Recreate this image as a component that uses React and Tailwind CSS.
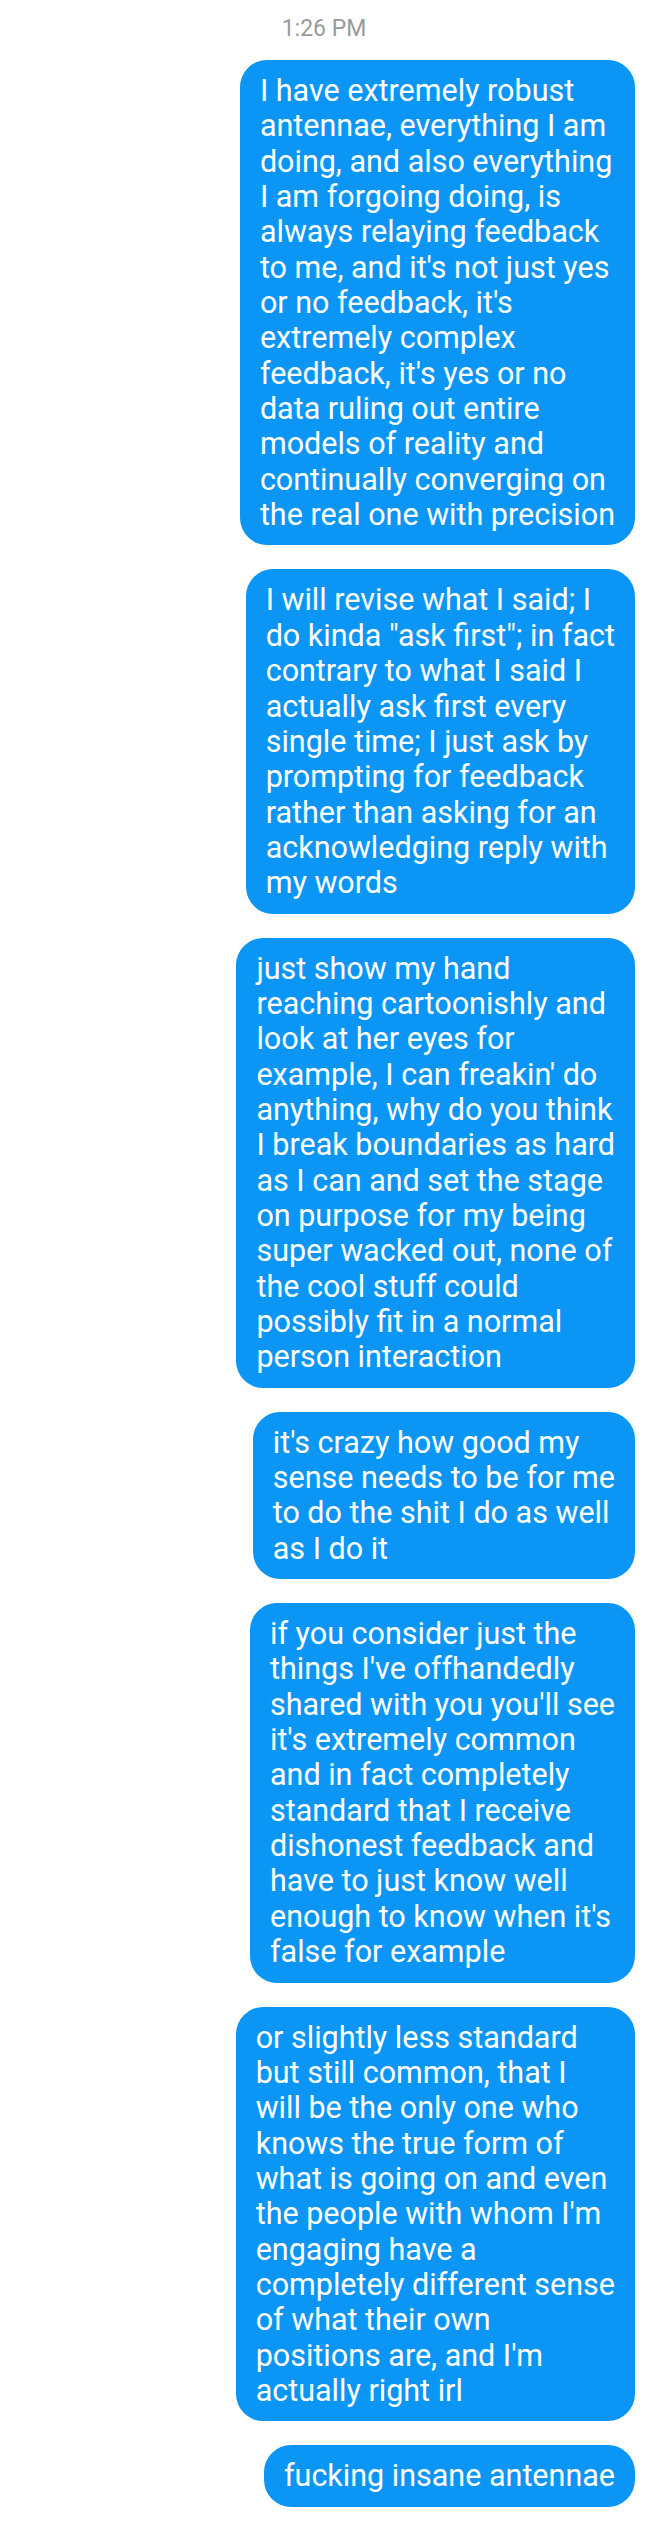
const messages = [
  [
    'I have extremely robust',
    'antennae, everything I am',
    'doing, and also everything',
    'I am forgoing doing, is',
    'always relaying feedback',
    "to me, and it's not just yes",
    "or no feedback, it's",
    'extremely complex',
    "feedback, it's yes or no",
    'data ruling out entire',
    'models of reality and',
    'continually converging on',
    'the real one with precision',
  ],
  [
    'I will revise what I said; I',
    'do kinda "ask first"; in fact',
    'contrary to what I said I',
    'actually ask first every',
    'single time; I just ask by',
    'prompting for feedback',
    'rather than asking for an',
    'acknowledging reply with',
    'my words',
  ],
  [
    'just show my hand',
    'reaching cartoonishly and',
    'look at her eyes for',
    "example, I can freakin' do",
    'anything, why do you think',
    'I break boundaries as hard',
    'as I can and set the stage',
    'on purpose for my being',
    'super wacked out, none of',
    'the cool stuff could',
    'possibly fit in a normal',
    'person interaction',
  ],
  [
    "it's crazy how good my",
    'sense needs to be for me',
    'to do the shit I do as well',
    'as I do it',
  ],
  [
    'if you consider just the',
    "things I've offhandedly",
    "shared with you you'll see",
    "it's extremely common",
    'and in fact completely',
    'standard that I receive',
    'dishonest feedback and',
    'have to just know well',
    "enough to know when it's",
    'false for example',
  ],
  [
    'or slightly less standard',
    'but still common, that I',
    'will be the only one who',
    'knows the true form of',
    'what is going on and even',
    "the people with whom I'm",
    'engaging have a',
    'completely different sense',
    'of what their own',
    "positions are, and I'm",
    'actually right irl',
  ],
  ['fucking insane antennae'],
];

function Bubble({ lines }) {
  return (
    <div className="self-end rounded-[27px] bg-[#0b96f5] px-5 py-[13px] text-[30.5px] leading-[35.35px] text-white whitespace-nowrap">
      {lines.map((line, i) => (
        <div key={i}>{line}</div>
      ))}
    </div>
  );
}

export default function App() {
  return (
    <div className="w-[648px] min-h-[2533px] bg-white font-['Roboto','Liberation_Sans',sans-serif]">
      <div className="pt-[14px] text-center text-[23px] leading-[30px] text-[#9a9a9a]">1:26 PM</div>
      <div className="flex flex-col gap-6 pt-4 pr-[13px] pb-[25px]">
        {messages.map((lines, i) => (
          <Bubble key={i} lines={lines} />
        ))}
      </div>
    </div>
  );
}
